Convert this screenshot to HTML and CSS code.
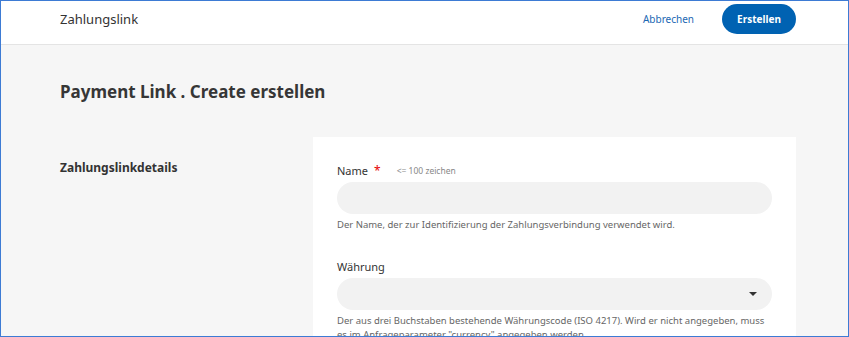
FILE: index.html
```html
<!DOCTYPE html>
<html lang="de">
<head>
<meta charset="utf-8">
<title>Zahlungslink</title>
<link rel="stylesheet" href="styles.css">
</head>
<body>
<div class="frame">
  <header class="topbar">
    <span class="app-title">Zahlungslink</span>
    <div class="actions">
      <a class="link-btn" href="#">Abbrechen</a>
      <button class="primary-btn" type="button">Erstellen</button>
    </div>
  </header>
  <main class="page">
    <h1 class="page-title">Payment Link . Create erstellen</h1>
    <section class="section">
      <h2 class="section-title">Zahlungslinkdetails</h2>
      <div class="card">
        <div class="field">
          <div class="label-row">
            <label class="label" for="name">Name</label>
            <span class="required">*</span>
            <span class="hint">&lt;= 100 zeichen</span>
          </div>
          <input class="input" id="name" type="text">
          <p class="help">Der Name, der zur Identifizierung der Zahlungsverbindung verwendet wird.</p>
        </div>
        <div class="field">
          <div class="label-row">
            <label class="label" for="currency">Währung</label>
          </div>
          <div class="select">
            <span class="caret"></span>
          </div>
          <p class="help">Der aus drei Buchstaben bestehende Währungscode (ISO 4217). Wird er nicht angegeben, muss es im Anfrageparameter "currency" angegeben werden.</p>
        </div>
      </div>
    </section>
  </main>
</div>
</body>
</html>
```
FILE: styles.css
```css
* { box-sizing: border-box; }
html, body { margin: 0; padding: 0; }
body {
  font-family: "Noto Sans", "Open Sans", sans-serif;
  color: #333;
}
.frame {
  width: 849px;
  height: 337px;
  border: 1px solid #3d7bd4;
  background: #f6f6f6;
  overflow: hidden;
}
.topbar {
  height: 44px;
  background: #fff;
  border-bottom: 1px solid #e4e4e4;
  display: flex;
  align-items: flex-start;
  justify-content: space-between;
  padding: 3px 52px 0 59px;
}
.app-title {
  font-size: 13px;
  line-height: 30px;
  color: #333;
}
.actions {
  display: flex;
  align-items: center;
  gap: 28px;
}
.link-btn {
  font-size: 10px;
  color: #1a67b3;
  text-decoration: none;
}
.primary-btn {
  width: 74px;
  height: 30px;
  border: 0;
  border-radius: 15px;
  background: #0062b2;
  color: #fff;
  font-family: inherit;
  font-size: 10px;
  font-weight: 700;
  padding: 0;
}
.page {
  padding: 35px 52px 0 59px;
}
.page-title {
  margin: 0 0 33px;
  font-size: 17px;
  line-height: 24px;
  font-weight: 700;
  color: #363636;
}
.section {
  display: flex;
  align-items: flex-start;
}
.section-title {
  width: 253px;
  flex: none;
  margin: 0;
  padding-top: 22px;
  font-size: 12px;
  line-height: 18px;
  font-weight: 700;
  color: #333;
}
.card {
  flex: 1;
  background: #fff;
  padding: 24px 24px 24px 24px;
}
.field + .field { margin-top: 25px; }
.label-row {
  display: flex;
  align-items: center;
  height: 18px;
  margin-bottom: 3px;
}
.label {
  font-size: 11px;
  color: #333;
}
.required {
  color: #e60000;
  font-size: 12px;
  margin-left: 6px;
}
.hint {
  font-size: 8.5px;
  color: #888;
  margin-left: 16px;
}
.input, .select {
  display: block;
  width: 100%;
  height: 32px;
  border: 0;
  border-radius: 16px;
  background: #f2f2f2;
  margin: 0;
}
.select {
  display: flex;
  align-items: center;
  justify-content: flex-end;
  padding-right: 15px;
}
.caret {
  width: 0;
  height: 0;
  border-left: 4px solid transparent;
  border-right: 4px solid transparent;
  border-top: 4px solid #333;
}
.help {
  margin: 4px 0 0;
  font-size: 9.5px;
  line-height: 14px;
  color: #666;
}
```
